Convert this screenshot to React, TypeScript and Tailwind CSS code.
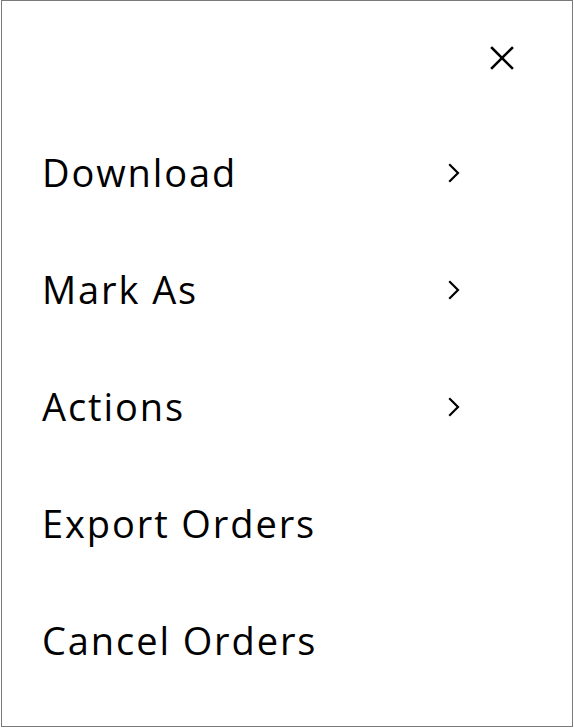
import React from 'react';

type Item = {
  label: string;
  hasSubmenu: boolean;
};

const items: Item[] = [
  { label: 'Download', hasSubmenu: true },
  { label: 'Mark As', hasSubmenu: true },
  { label: 'Actions', hasSubmenu: true },
  { label: 'Export Orders', hasSubmenu: false },
  { label: 'Cancel Orders', hasSubmenu: false },
];

const CloseIcon = () => (
  <svg width="24" height="24" viewBox="0 0 24 24" fill="none" stroke="currentColor" strokeWidth="2.6" strokeLinecap="square">
    <path d="M2 2 L22 22" />
    <path d="M22 2 L2 22" />
  </svg>
);

const Chevron = () => (
  <svg width="12" height="20" viewBox="0 0 12 20" fill="none" stroke="currentColor" strokeWidth="2.2" strokeLinecap="square" strokeLinejoin="miter">
    <path d="M2 2 L10 10 L2 18" />
  </svg>
);

export default function App() {
  return (
    <div className="w-[574px] h-[728px] bg-white pl-px">
      <div
        className="w-[572px] h-[727px] border border-[#7a7a7a] flex flex-col text-black"
        style={{ fontFamily: '"Open Sans", "Noto Sans", sans-serif' }}
      >
        <div className="h-[112px] flex justify-end items-start pt-[45px] pr-[58px]">
          <button type="button" className="text-black">
            <CloseIcon />
          </button>
        </div>
        <ul className="flex flex-col pl-[40px] pr-[112px]">
          {items.map((item) => (
            <li key={item.label} className="h-[117px] flex items-center justify-between">
              <span className="text-[38px] leading-none tracking-[1.9px]">{item.label}</span>
              {item.hasSubmenu && (
                <span className="pt-[2px]">
                  <Chevron />
                </span>
              )}
            </li>
          ))}
        </ul>
      </div>
    </div>
  );
}
